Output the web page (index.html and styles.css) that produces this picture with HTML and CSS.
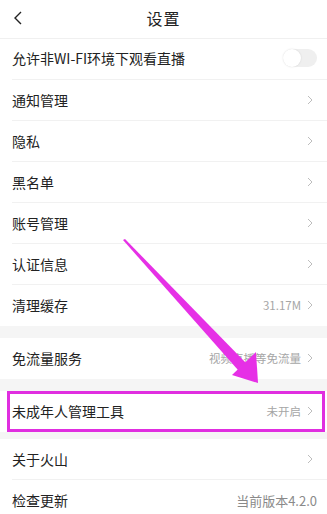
FILE: index.html
```
<!DOCTYPE html>
<html lang="zh-CN">
<head>
  <meta charset="UTF-8">
  <meta name="viewport" content="width=device-width, initial-scale=1.0">
  <title>设置</title>
  <link rel="stylesheet" href="styles.css">
</head>
<body>
  <div class="page">
    <header class="topbar">
      <svg class="back" width="10" height="14" viewBox="0 0 10 14"><polyline points="8,1 2,7 8,13" /></svg>
      <h1>设置</h1>
    </header>

    <section class="group">
      <div class="row row--first">
        <span class="label">允许非WI-FI环境下观看直播</span>
        <span class="switch"><span class="knob"></span></span>
      </div>
      <div class="row"><span class="label">通知管理</span><svg class="chev" viewBox="0 0 6 10"><polyline points="1,1 5,5 1,9" /></svg></div>
      <div class="row"><span class="label">隐私</span><svg class="chev" viewBox="0 0 6 10"><polyline points="1,1 5,5 1,9" /></svg></div>
      <div class="row"><span class="label">黑名单</span><svg class="chev" viewBox="0 0 6 10"><polyline points="1,1 5,5 1,9" /></svg></div>
      <div class="row"><span class="label">账号管理</span><svg class="chev" viewBox="0 0 6 10"><polyline points="1,1 5,5 1,9" /></svg></div>
      <div class="row"><span class="label">认证信息</span><svg class="chev" viewBox="0 0 6 10"><polyline points="1,1 5,5 1,9" /></svg></div>
      <div class="row row--last"><span class="label">清理缓存</span><span class="value">31.17M</span><svg class="chev" viewBox="0 0 6 10"><polyline points="1,1 5,5 1,9" /></svg></div>
    </section>

    <section class="group">
      <div class="row row--last"><span class="label">免流量服务</span><span class="value">视频直播等免流量</span><svg class="chev" viewBox="0 0 6 10"><polyline points="1,1 5,5 1,9" /></svg></div>
    </section>

    <section class="group group--tight">
      <div class="row row--last row--marked"><span class="label">未成年人管理工具</span><span class="value">未开启</span><svg class="chev" viewBox="0 0 6 10"><polyline points="1,1 5,5 1,9" /></svg></div>
    </section>

    <section class="group">
      <div class="row"><span class="label">关于火山</span><svg class="chev" viewBox="0 0 6 10"><polyline points="1,1 5,5 1,9" /></svg></div>
      <div class="row row--last"><span class="label">检查更新</span><span class="value value--dark">当前版本4.2.0</span></div>
    </section>

    <svg class="pointer" width="327" height="514" viewBox="0 0 327 514">
      <polygon points="123,240 125,239 246,363 238,370" />
      <polygon points="258,383 232,375 256,352" />
    </svg>
  </div>
</body>
</html>
```

FILE: styles.css
```
* {
  box-sizing: border-box;
  margin: 0;
  padding: 0;
}
html, body {
  background: #f5f5f5;
}
body {
  font-family: "Noto Sans CJK SC", "Noto Sans", sans-serif;
  color: #222;
}
.page {
  position: relative;
  width: 327px;
  height: 514px;
  overflow: hidden;
}

/* header */
.topbar {
  height: 39px;
  display: flex;
  align-items: center;
  justify-content: center;
  position: relative;
  background: #fff;
  border-bottom: 1px solid #f0f0f0;
  padding-bottom: 2px;
}
.topbar h1 {
  font-size: 16px;
  font-weight: 400;
  letter-spacing: 1px;
}
.back {
  position: absolute;
  left: 13px;
  top: 11px;
  fill: none;
  stroke: #222;
  stroke-width: 1.4;
}

/* groups + rows */
.group {
  background: #fff;
}
.group + .group {
  margin-top: 12px;
}
.group--tight + .group {
  margin-top: 7px;
}
.row {
  height: 41px;
  display: flex;
  align-items: center;
  padding: 0 12px 1px;
  position: relative;
}
.row--first {
  padding-bottom: 3px;
}
.row::before {
  content: "";
  position: absolute;
  left: 12px;
  right: 0;
  bottom: 0;
  height: 1px;
  background: #f1f1f1;
}
.row--last::before {
  display: none;
}
.label {
  flex: 1;
  font-size: 14px;
}
.value {
  font-size: 11.5px;
  color: #a6a6a6;
  margin-right: 6px;
}
.value--dark {
  font-size: 13px;
  color: #8a8a8a;
  margin-right: -2px;
}
.chev {
  width: 6px;
  height: 10px;
  margin-right: 2px;
  fill: none;
  stroke: #bdbdbd;
  stroke-width: 1;
}

/* switch */
.switch {
  width: 34px;
  height: 18px;
  border-radius: 9px;
  background: #efefef;
  margin-right: -2px;
  display: flex;
  align-items: center;
}
.knob {
  width: 18px;
  height: 18px;
  border-radius: 50%;
  background: #fff;
  box-shadow: 0 0 2px rgba(0, 0, 0, 0.12);
}

/* annotation */
.row--marked::after {
  content: "";
  position: absolute;
  left: 7px;
  right: 2px;
  top: 0;
  bottom: 0;
  border: 3px solid #e02ee0;
}
.pointer {
  position: absolute;
  left: 0;
  top: 0;
  fill: #e630e6;
}
```
